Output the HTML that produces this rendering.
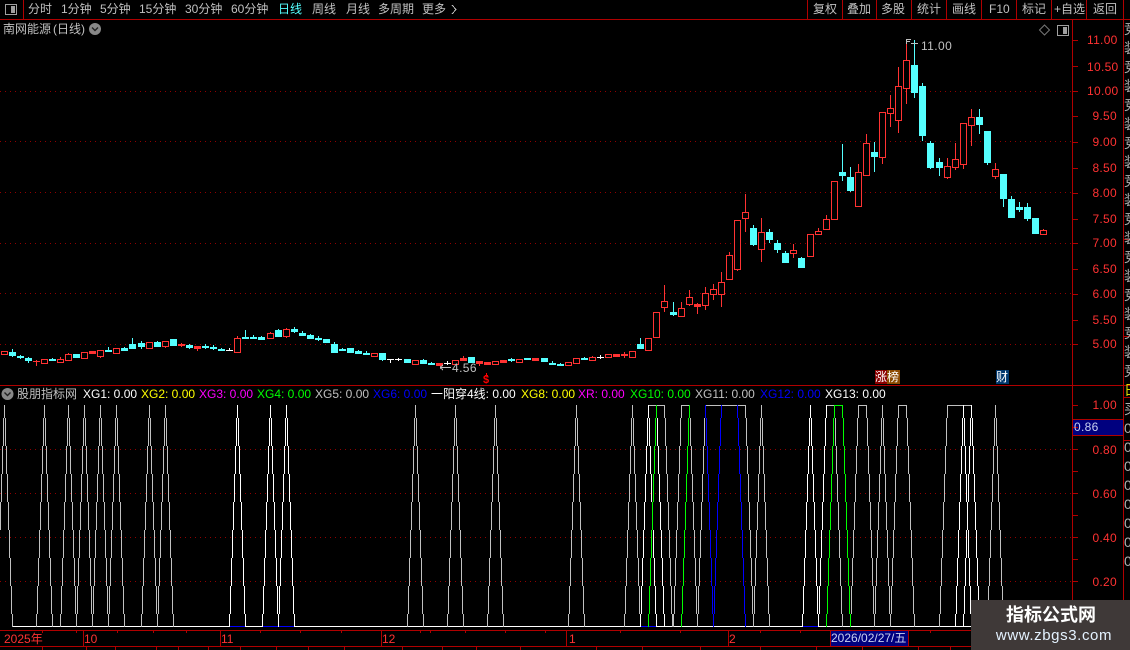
<!DOCTYPE html>
<html><head><meta charset="utf-8">
<style>
html,body{margin:0;padding:0;background:#000;width:1130px;height:650px;overflow:hidden}
#c{position:relative;width:1130px;height:650px;overflow:hidden;background:#000;font-family:"Liberation Sans","Noto Sans CJK SC",sans-serif}
#c div.t{position:absolute;white-space:nowrap;font-size:12px;line-height:14px;color:#c0c0c0}
#c div.a{left:1087px;width:30px;text-align:right;color:#ff3232;letter-spacing:.3px}
svg{position:absolute;left:0;top:0}
</style></head><body><div id="c">
<svg id="s" width="1130" height="650" viewBox="0 0 1130 650" shape-rendering="crispEdges"></svg>
<div class="t" style="left:28px;top:2px">分时</div>
<div class="t" style="left:61px;top:2px">1分钟</div>
<div class="t" style="left:100px;top:2px">5分钟</div>
<div class="t" style="left:139px;top:2px">15分钟</div>
<div class="t" style="left:185px;top:2px">30分钟</div>
<div class="t" style="left:231px;top:2px">60分钟</div>
<div class="t" style="left:278px;top:2px;color:#55ffff">日线</div>
<div class="t" style="left:312px;top:2px">周线</div>
<div class="t" style="left:346px;top:2px">月线</div>
<div class="t" style="left:378px;top:2px">多周期</div>
<div class="t" style="left:422px;top:2px">更多</div>
<div class="t" style="left:813px;top:2px">复权</div>
<div class="t" style="left:847px;top:2px">叠加</div>
<div class="t" style="left:881px;top:2px">多股</div>
<div class="t" style="left:917px;top:2px">统计</div>
<div class="t" style="left:952px;top:2px">画线</div>
<div class="t" style="left:989px;top:2px">F10</div>
<div class="t" style="left:1022px;top:2px">标记</div>
<div class="t" style="left:1054px;top:2px">+自选</div>
<div class="t" style="left:1093px;top:2px">返回</div>
<div class="t" style="left:3px;top:22px">南网能源<span style="margin-left:2px">(日线)</span></div>
<div class="t" style="left:921px;top:39px;letter-spacing:.4px">11.00</div>
<div class="t" style="left:452px;top:361px;letter-spacing:.4px">4.56</div>
<div class="t" style="left:17px;top:387px">股朋指标网</div>
<div class="t" style="left:83px;top:387px;color:#fff">XG1: 0.00</div>
<div class="t" style="left:141px;top:387px;color:#ffff00">XG2: 0.00</div>
<div class="t" style="left:199px;top:387px;color:#ff00ff">XG3: 0.00</div>
<div class="t" style="left:257px;top:387px;color:#00ff00">XG4: 0.00</div>
<div class="t" style="left:315px;top:387px">XG5: 0.00</div>
<div class="t" style="left:373px;top:387px;color:#0000ff">XG6: 0.00</div>
<div class="t" style="left:431px;top:387px;color:#fff">一阳穿4线: 0.00</div>
<div class="t" style="left:521px;top:387px;color:#ffff00">XG8: 0.00</div>
<div class="t" style="left:578px;top:387px;color:#ff00ff">XR: 0.00</div>
<div class="t" style="left:630px;top:387px;color:#00ff00">XG10: 0.00</div>
<div class="t" style="left:695px;top:387px">XG11: 0.00</div>
<div class="t" style="left:760px;top:387px;color:#0000ff">XG12: 0.00</div>
<div class="t" style="left:825px;top:387px;color:#fff">XG13: 0.00</div>
<div class="t" style="left:1074px;top:420px;color:#c8d0f0;letter-spacing:.3px">0.86</div>
<div class="t" style="left:4px;top:632px;color:#ff3232">2025年</div>
<div class="t" style="left:84px;top:632px;color:#ff3232">10</div>
<div class="t" style="left:221px;top:632px;color:#ff3232">11</div>
<div class="t" style="left:382px;top:632px;color:#ff3232">12</div>
<div class="t" style="left:569px;top:632px;color:#ff3232">1</div>
<div class="t" style="left:729px;top:632px;color:#ff3232">2</div>
<div class="t" style="left:831px;top:631px;width:77px;height:15px;background:#00007f;color:#c8d0f0">2026/02/27/五</div>
<div class="t" style="left:875px;top:370px;width:12px;height:14px;background:#8b0000;color:#fff">涨</div>
<div class="t" style="left:887px;top:370px;width:13px;height:14px;background:#8b4a00;color:#fff">榜</div>
<div class="t" style="left:996px;top:370px;width:13px;height:14px;background:#00386e;color:#fff">财</div>
<div class="t" style="left:483px;top:373px;color:#ff0000;font-weight:bold;font-size:11px">$</div>
<div class="t a" style="top:33px">11.00</div>
<div class="t a" style="top:60px">10.50</div>
<div class="t a" style="top:84px">10.00</div>
<div class="t a" style="top:109px">9.50</div>
<div class="t a" style="top:135px">9.00</div>
<div class="t a" style="top:161px">8.50</div>
<div class="t a" style="top:186px">8.00</div>
<div class="t a" style="top:212px">7.50</div>
<div class="t a" style="top:236px">7.00</div>
<div class="t a" style="top:262px">6.50</div>
<div class="t a" style="top:287px">6.00</div>
<div class="t a" style="top:313px">5.50</div>
<div class="t a" style="top:337px">5.00</div>
<div class="t a" style="top:398px">1.00</div>
<div class="t a" style="top:443px">0.80</div>
<div class="t a" style="top:487px">0.60</div>
<div class="t a" style="top:531px">0.40</div>
<div class="t a" style="top:575px">0.20</div>
<div style="position:absolute;left:1124px;top:20px;width:6px;height:630px;overflow:hidden;color:#b0b0b0;font-size:14px;line-height:19px">
<div>竞<br>装<br>竞<br>装<br>竞<br>装<br>竞<br>装<br>竞<br>装<br>竞<br>装<br>竞<br>装<br>竞<br>装<br>竞<br>装<br>竞<br><span style="color:#dd0">日</span><br>买<br>0<br>0<br>0<br>0<br>0<br>0<br>0<br>0</div></div>
<div style="position:absolute;left:971px;top:600px;width:159px;height:50px;background:#3f3938"></div>
<div class="t" style="left:971px;top:604px;width:160px;text-align:center;font-size:18px;line-height:23px;font-weight:bold;color:#fff">指标公式网</div>
<div class="t" style="left:974px;top:627px;width:160px;text-align:center;font-size:15px;line-height:18px;color:#e4f2ff;letter-spacing:.6px">www.zbgs3.com</div>
</div>
<script>
(function(){
var R='#ff3232',C='#55ffff',W='#ffffff',G='#c0c0c0',B='#0000ff',N='#00ff00',D='#b00000';
var h='';
function L(x1,y1,x2,y2,c,a){h+='<line x1="'+x1+'" y1="'+y1+'" x2="'+x2+'" y2="'+y2+'" stroke="'+c+'" '+(a||'')+'/>';}
function Rc(x,y,w,hh,f,s){h+='<rect x="'+x+'" y="'+y+'" width="'+w+'" height="'+hh+'" fill="'+f+'"'+(s?' stroke="'+s+'"':'')+'/>';}
/* grid */
[91.5,141.5,192.5,243.5,293.5,344.5,449.5,493.5,537.5,581.5].forEach(function(y){L(0,y,1072,y,'#900000','stroke-dasharray="1 4"');});
/* panel lines */
L(0,19.5,1130,19.5,D);L(0,385.5,1130,385.5,D);L(0,630.5,1130,630.5,D);L(0,646.5,1130,646.5,D);
L(1072.5,19,1072.5,630,D);L(1123.5,0,1123.5,650,D);
L(1073,419.5,1123,419.5,D);L(1073,435.5,1123,435.5,D);
Rc(1073,420,50,15,'#00007f');
[23,807,842,876,911,946,981,1016,1051,1086].forEach(function(x){L(x+.5,0,x+.5,19,D);});
[83,220,381,566,728].forEach(function(x){L(x+.5,630,x+.5,646,D);});
L(908.5,630,908.5,646,D);L(830.5,630,830.5,646,D);
[40,66,91,116,142,168,193,219,243,269,294,320,344,405,427,449,471,493,515,537,559,581,603].forEach(function(y){L(1072,y+.5,1078,y+.5,D);});
[239,336,397,440].forEach(function(y){L(1123,y+.5,1130,y+.5,D);});
[42,76,117,153,186,260,300,341,420,430,465,505,545,620,680,760,800,840,930,990].forEach(function(x){L(x+.5,630,x+.5,633,D);});
[42,86,115,156,178,208,240,276,308,344,402,442,476,520,596,642,700,760,816,862,918,950,1000,1040,1080,1108].forEach(function(x){L(x+.5,646,x+.5,650,D);});
/* candles: [z, wickTop, bodyTop, bodyBot, wickBot, type] */
function group(list,bx,by){list.forEach(function(d){
 var col=Math.floor(d[0]/3)+bx,wt=by+d[1]/3,bt=by+d[2]/3,bb=by+d[3]/3,wb=by+d[4]/3,t=d[5];
 var c=t=='c'?C:t=='w'?W:R;
 bt=Math.round(bt);bb=Math.round(bb);wt=Math.round(wt);wb=Math.round(wb);
 if(wt<bt)L(col+.5,wt,col+.5,bt,c);
 if(wb>bb)L(col+.5,bb,col+.5,wb+0,c);
 if(t=='c'||t=='w'||bb-bt<3){Rc(col-3,bt,7,Math.max(1,bb-bt+(t=='w'?0:1)),c);}
 else{Rc(col-2.5,bt+.5,6,bb-bt,'#000',c);}
});}
group([[13,94,94,101,105,'r'],[37,88,95,105,111,'c'],[61,104,107,110,117,'c'],[85,111,114,120,129,'c'],[109,120,122,124,138,'r'],[133,118,118,128,128,'r'],[157,114,117,120,123,'c'],[181,111,118,125,125,'r'],[205,99,103,119,121,'r'],[229,102,102,111,111,'c'],[253,97,97,113,113,'r'],[277,93,94,99,102,'r'],[301,91,91,109,114,'r'],[325,81,90,94,96,'c'],[349,85,85,98,98,'r'],[373,81,84,90,93,'c'],[397,54,72,84,87,'c'],[424,63,69,78,87,'c'],[448,66,67,83,85,'r'],[472,63,67,78,78,'c'],[496,63,64,77,84,'r'],[520,57,57,75,75,'c'],[543,69,73,75,81,'r'],[568,72,75,81,87,'c'],[592,78,79,83,93,'r'],[616,73,78,81,87,'c'],[640,75,81,84,90,'c'],[663,84,87,90,93,'c'],[687,84,90,92,92,'w'],[712,48,55,95,95,'r'],[736,29,51,53,54,'c'],[760,44,51,53,54,'c'],[784,48,51,56,57,'c'],[811,36,39,53,57,'r'],[835,27,30,48,51,'c'],[859,24,28,47,54,'r'],[883,21,27,33,39,'c'],[907,33,39,45,48,'c'],[931,42,45,53,54,'c'],[955,48,54,57,64,'c']],0,320);
group([[19,57,57,66,69,'c'],[43,66,72,96,96,'c'],[67,84,87,90,93,'c'],[91,84,84,96,96,'c'],[115,90,94,98,102,'c'],[139,93,98,101,105,'c'],[163,99,99,107,107,'r'],[187,99,99,117,122,'c'],[210,117,118,120,129,'w'],[234,114,118,120,123,'w'],[262,117,117,125,129,'c'],[286,120,120,131,131,'r'],[310,117,120,129,132,'c'],[334,126,129,131,133,'c'],[358,129,129,134,138,'r'],[381,123,129,131,134,'w'],[406,121,121,131,131,'r'],[430,108,114,119,120,'r'],[454,111,111,126,126,'c'],[478,124,124,128,138,'r'],[502,126,127,131,131,'r'],[526,123,123,131,131,'r'],[550,120,121,125,125,'r'],[574,114,118,121,126,'c'],[598,118,118,125,125,'r'],[622,114,114,117,120,'c'],[646,114,115,119,119,'r'],[673,114,114,123,126,'c'],[697,123,129,132,135,'c'],[721,129,132,134,138,'c'],[745,126,126,134,134,'r'],[769,114,114,128,128,'r'],[793,111,114,117,120,'c'],[817,108,112,119,119,'r'],[840,105,111,113,117,'w'],[865,102,102,110,110,'r'],[889,102,102,107,110,'r'],[912,96,103,105,114,'r'],[937,93,93,110,110,'r']],320,320);
group([[121,924,942,954,957,'c'],[145,925,925,959,959,'r'],[169,847,847,920,920,'r'],[193,765,814,830,845,'r'],[220,816,846,852,857,'c'],[244,816,835,857,857,'r'],[268,780,802,821,828,'r'],[292,820,822,828,852,'r'],[316,771,790,824,840,'r'],[340,762,778,791,810,'r'],[364,726,757,791,831,'r'],[388,666,676,746,746,'r'],[412,571,571,716,723,'r'],[436,492,547,563,606,'r'],[460,585,594,642,648,'c'],[484,564,607,656,696,'r'],[508,597,606,627,640,'c'],[532,630,640,657,669,'c'],[556,663,669,696,696,'c'],[580,641,660,668,684,'r'],[604,681,684,711,714,'c'],[631,613,613,677,677,'r'],[655,594,603,611,615,'r'],[679,555,568,596,596,'r'],[703,454,454,566,570,'r']],600,30);
group([[7,342,426,435,453,'c'],[31,411,441,480,486,'c'],[55,402,427,527,531,'r'],[79,312,340,434,434,'r'],[103,336,366,378,426,'c'],[127,247,247,380,402,'r'],[151,195,235,248,291,'r'],[175,111,169,269,309,'r'],[199,35,91,173,222,'r'],[223,30,105,186,204,'c'],[247,159,168,315,333,'c'],[271,333,339,411,417,'c'],[298,384,396,411,438,'c'],[322,384,409,440,447,'r'],[346,339,388,410,420,'r'],[370,279,279,401,417,'r'],[394,237,262,285,348,'r'],[418,237,261,282,312,'c'],[442,303,303,396,405,'c'],[466,399,418,437,447,'r'],[490,432,432,504,531,'c'],[514,498,507,561,564,'c'],[538,516,531,537,546,'c'],[562,519,531,564,573,'c'],[586,564,564,609,612,'c'],[610,597,601,611,611,'r']],840,30);
/* price markers */
L(911,43.5,918,43.5,G);L(906.5,39,906.5,44,G);L(906,39.5,911,39.5,G);L(906,41.5,910,41.5,G);
L(441,367.5,451,367.5,G);L(443,365,440,367.5,G);L(443,370,440,367.5,G);
L(486.5,373,486.5,376,'#ff0000');L(485,375.5,488,375.5,'#ff0000');
/* indicator: staircase legs, 8 one-pixel columns between apex (y405) and foot (y626) */
var top=405,bot=627;
function leg(a,b,c){var ax=Math.floor(a),dir=b>a?1:-1;
 for(var k=0;k<=8;k++){var y0=k==0?top:418+28*(k-1),y1=k==8?bot:418+28*k;
  if(k==8)y1=bot;
  L(ax+dir*k+.5,y0,ax+dir*k+.5,y1,c);}}
function tri(x,c){leg(x,x-8,c);leg(x,x+8,c);}
function plat(a,b,c){leg(a,a-8,c);leg(b,b+8,c);L(Math.floor(a),top+.5,Math.floor(b)+1,top+.5,c);}
L(12,626.5,1072,626.5,W);
[[229,245],[262,294],[640,656],[802,818],[972,1000]].forEach(function(s){L(s[0],626.5,s[1],626.5,B);});
[4.5,44.5,68.5,84.5,100.5,116.5,149.5,165.5,415.5,455.5,495.5,576.5,632.5,761.5,882.5,995.5].forEach(function(x){tri(x,G);});
[[648.5,664.5],[681.5,689.5],[705.5,745.5],[826.5,842.5],[858.5,866.5],[898.5,906.5],[947.5,971.5]].forEach(function(s){plat(s[0],s[1],G);});
[237.5,270.5,286.5,810.5,963.5].forEach(function(x){tri(x,W);});
tri(648.5,W);leg(656.5,664.5,W);leg(826.5,818.5,W);leg(971.5,963.5,W);leg(971.5,979.5,W);
leg(834.5,842.5,G);
leg(656.5,648.5,N);leg(689.5,681.5,N);leg(834.5,826.5,N);leg(842.5,850.5,N);
L(834,405.5,843,405.5,N);
leg(705.5,713.5,B);leg(721.5,713.5,B);leg(737.5,745.5,B);
/* top-left icon */
Rc(5.5,4.5,11,10,'none','#a0a0a0');Rc(11,6,4,7,'#a0a0a0');
L(23.5,0,23.5,19,D);
/* more chevron */
L(452,5,456,9.5,G);L(456,9.5,452,14,G);
/* circles */
function circ(cx,cy){h+='<circle cx="'+cx+'" cy="'+cy+'" r="6" fill="#888" shape-rendering="auto"/><polyline points="'+(cx-3)+','+(cy-1.5)+' '+cx+','+(cy+1.5)+' '+(cx+3)+','+(cy-1.5)+'" fill="none" stroke="#222" stroke-width="1.4" shape-rendering="auto"/>';}
circ(95,29);circ(7.5,394);
/* diamond and panel icon */
h+='<polygon points="1044.5,25 1049.5,30 1044.5,35 1039.5,30" fill="none" stroke="#777" shape-rendering="auto"/>';
Rc(1057.5,25.5,11,10,'none','#a0a0a0');Rc(1063,27,4,7,'#a0a0a0');
document.getElementById('s').innerHTML=h;
})();
</script>
</body></html>
